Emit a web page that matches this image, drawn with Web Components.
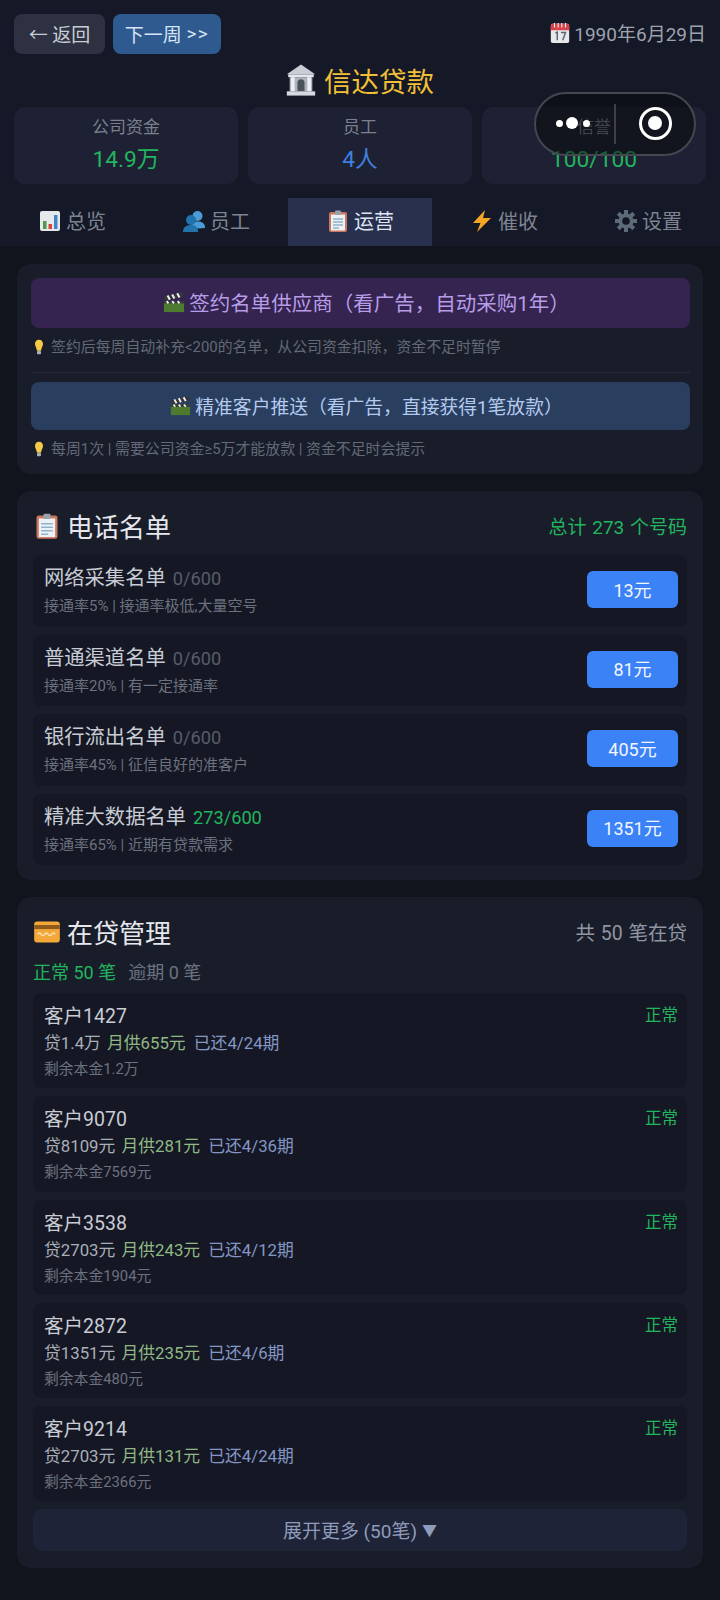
<!DOCTYPE html>
<html lang="zh">
<head>
<meta charset="utf-8">
<title>信达贷款</title>
<style>
  html,body{margin:0;padding:0;background:#11141c}
  body{width:720px;height:1600px;overflow:hidden;font-family:Roboto,"Noto Sans CJK SC",sans-serif;color:#c8ccd4}
</style>
</head>
<body>
<game-screen></game-screen>
<script>
// emoji have no font here, so each one is a small svg
const ICONS = {
  calendar:`<rect x="2" y="2" width="20" height="21" rx="2" fill="#e8e8ea"/><path d="M2 4a2 2 0 0 1 2-2h16a2 2 0 0 1 2 2v5H2z" fill="#d8434b"/><path d="M6 1v5M10 1v5M14 1v5M18 1v5" stroke="#eee" stroke-width="1.2"/><path d="M7 12l2-1v9M13 11.5h5l-3 8.5" fill="none" stroke="#5b6675" stroke-width="1.6"/>`,
  bank:`<path d="M12 1L22 8H2z" fill="#c9ced6"/><rect x="3" y="8" width="18" height="2" fill="#e3e6ea"/><rect x="4" y="10" width="16" height="10" fill="#aeb5bf"/><path d="M5 10h2.500v10H5zM16.500 10H19v10h-2.500z" fill="#eef0f3"/><path d="M9.500 20v-6a2.500 2.500 0 0 1 5 0v6z" fill="#4c525c"/><rect x="2" y="20" width="20" height="3" fill="#d6dae0"/>`,
  chart:`<rect x="2" y="2" width="20" height="20" rx="2" fill="#e6e8ec"/><rect x="5" y="12" width="3.500" height="8" fill="#4f9a4a"/><rect x="10.500" y="15" width="3.500" height="5" fill="#d8413c"/><rect x="16" y="6" width="3.500" height="14" fill="#3f86c8"/>`,
  people:`<circle cx="15.500" cy="7" r="5" fill="#4a9bd6"/><path d="M9 20c0-6 2-7.500 6.500-7.500S23 14.500 23 18v1z" fill="#4a9bd6"/><circle cx="9" cy="11" r="5" fill="#2273ac"/><path d="M1 23c0-5 3-7 8-7s7 2 7 7z" fill="#2273ac"/>`,
  clip:`<rect x="3" y="3" width="18" height="20" rx="2" fill="#c9785f"/><rect x="5" y="5.500" width="14" height="16" fill="#eef1f4"/><path d="M7 10h10M7 13h10M7 16h10M7 19h6" stroke="#8fb3cf" stroke-width="1.300"/><rect x="9" y="1.500" width="6" height="4.500" rx="1" fill="#9aa2ad"/>`,
  bolt:`<path d="M15 1L3 14h7.500L7 23 21 9h-8z" fill="#f5a623"/>`,
  gear:`<g fill="#5d6b78"><circle cx="12" cy="12" r="7.500"/><path d="M10 1h4v5h-4zM10 18h4v5h-4zM1 10h5v4H1zM18 10h5v4h-5z"/><path d="M10 1h4v5h-4zM10 18h4v5h-4zM1 10h5v4H1zM18 10h5v4h-5z" transform="rotate(45 12 12)"/></g><circle cx="12" cy="12" r="3.800" fill="#141722"/>`,
  clapper:`<rect x="1" y="11" width="22" height="12" fill="#4d7a2e"/><path d="M1 6l20-5 1.500 5L2 11z" fill="#33373a"/><path d="M5 5l2.500 4.500M10 3.800l2.500 4.500M15.500 2.500l2.500 4.500" stroke="#eee" stroke-width="2.200"/><path d="M1 11h22v2.500H1z" fill="#33373a"/><path d="M4 11l2 2.500M10 11l2 2.500M16 11l2 2.500" stroke="#eee" stroke-width="2"/>`,
  bulb:`<path d="M12 1C8 1 6 4 6 7.500c0 3.500 2.500 5.500 3 10h6c.5-4.500 3-6.500 3-10C18 4 16 1 12 1z" fill="#f7c948"/><rect x="9" y="18" width="6" height="5" rx="1.500" fill="#aab0ba"/>`,
  card:`<rect x="1" y="3" width="22" height="18" rx="2.500" fill="#f5a83a"/><rect x="1" y="6" width="22" height="3.500" fill="#8f5a1c"/><path d="M4 14c1-1.500 2-1.500 3 0s2 1.500 3 0 2-1.500 3 0 2 1.500 3 0 2-1.500 3 0" fill="none" stroke="#fbe3bd" stroke-width="1.200"/>`
};

class EmojiIcon extends HTMLElement {
  connectedCallback() {
    const s = this.getAttribute("size") || 20;
    this.attachShadow({ mode: "open" }).innerHTML = `
      <style>:host{display:inline-flex;flex:none}svg{display:block}</style>
      <svg width="${s}" height="${s}" viewBox="0 0 24 24">${ICONS[this.getAttribute("name")] || ""}</svg>`;
  }
}

class TopBar extends HTMLElement {
  constructor() {
    super();
    this.attachShadow({ mode: "open" }).innerHTML = `
      <style>
        :host{display:flex;align-items:center;height:40px;gap:8px;padding:14px 14px 0}
        .b{height:40px;display:flex;align-items:center;justify-content:center;border-radius:8px;font-size:19px;box-sizing:border-box;padding-bottom:2px;white-space:pre}
        .back{width:91px;background:#2d3142;color:#c8ccd4}
        .next{width:108px;background:#2f5a8f;color:#d6e4f5}
        .next span{letter-spacing:1.500px}
        .date{margin-left:auto;font-size:19px;color:#9da3ae;display:flex;align-items:center;gap:3px;padding-bottom:3px}
      </style>
      <div class="b back">← 返回</div>
      <div class="b next">下一周 <span>&gt;&gt;</span></div>
      <div class="date"><emoji-icon name="calendar" size="22"></emoji-icon>1990年6月29日</div>`;
  }
}

class StatCard extends HTMLElement {
  connectedCallback() {
    this.attachShadow({ mode: "open" }).innerHTML = `
      <style>
        :host{display:flex;flex-direction:column;align-items:center;flex:1 1 0;height:77px;background:#1e2133;border-radius:11px;box-sizing:border-box;padding-top:7px}
        .l{font-size:17px;line-height:24px;margin-top:1px;color:#7b808e}
        .v{font-size:22.800px;line-height:36px;margin-top:3px;color:${this.getAttribute("color")}}
      </style>
      <div class="l">${this.getAttribute("label")}</div>
      <div class="v">${this.getAttribute("value")}</div>`;
  }
}

class TabBar extends HTMLElement {
  connectedCallback() {
    const tabs = [["chart","总览"],["people","员工"],["clip","运营"],["bolt","催收"],["gear","设置"]];
    this.attachShadow({ mode: "open" }).innerHTML = `
      <style>
        :host{display:grid;grid-template-columns:repeat(5,144px);height:48px;margin-top:14px}
        div{display:flex;align-items:center;justify-content:center;gap:4px;font-size:20px;color:#7d8491;padding-bottom:3px;box-sizing:border-box}
        .on{background:#28304d;color:#dfe5f2}
      </style>
      ${tabs.map((t, i) => `<div class="${i == 2 ? "on" : ""}"><emoji-icon name="${t[0]}" size="24"></emoji-icon>${t[1]}</div>`).join("")}`;
  }
}

class PanelCard extends HTMLElement {
  constructor() {
    super();
    this.attachShadow({ mode: "open" }).innerHTML = `
      <style>
        :host{display:block;margin:0 17px;background:#191d2a;border-radius:14px;box-sizing:border-box}
      </style>
      <slot></slot>`;
  }
}

class AdAction extends HTMLElement {
  connectedCallback() {
    const purple = this.hasAttribute("purple");
    this.attachShadow({ mode: "open" }).innerHTML = `
      <style>
        :host{display:block}
        .b{height:${purple ? 50 : 48}px;border-radius:8px;display:flex;align-items:center;justify-content:center;gap:4px;font-size:${purple ? 20.5 : 18.8}px;padding:0 0 2px 12px;box-sizing:border-box;
           background:${purple ? "#35244f" : "#2a3f5f"};color:${purple ? "#b79ce8" : "#b4cbef"}}
        .h{font-size:14.900px;line-height:20px;margin-top:9px;color:#636977;display:flex;align-items:center;gap:4px}
      </style>
      <div class="b"><emoji-icon name="clapper" size="${purple ? 22 : 21}"></emoji-icon><span><slot></slot></span></div>
      <div class="h"><emoji-icon name="bulb" size="16"></emoji-icon><span>${this.getAttribute("hint")}</span></div>`;
  }
}

class SectionHead extends HTMLElement {
  connectedCallback() {
    this.attachShadow({ mode: "open" }).innerHTML = `
      <style>
        :host{display:flex;align-items:center;justify-content:space-between;height:38px}
        .t{font-size:26px;color:#e6e8ee;display:flex;align-items:center;gap:6px;padding-bottom:3px}
        .r{font-size:${this.getAttribute("side-size") || 19}px;word-spacing:1px;padding-bottom:3px;color:${this.getAttribute("color")}}
      </style>
      <div class="t"><emoji-icon name="${this.getAttribute("icon")}" size="28"></emoji-icon>${this.getAttribute("title")}</div>
      <div class="r">${this.getAttribute("side")}</div>`;
  }
}

class ListRow extends HTMLElement {
  connectedCallback() {
    const has = this.getAttribute("count")[0] != "0";
    this.attachShadow({ mode: "open" }).innerHTML = `
      <style>
        :host{display:flex;align-items:center;justify-content:space-between;height:71.500px;background:#151824;border-radius:8px;padding:0 9px 2px 11px;box-sizing:border-box}
        .n{font-size:20.300px;line-height:30px;color:#c8ccd4}
        .c{font-size:18.200px;margin-left:2px;color:${has ? "#22b45e" : "#565c6a"}}
        .s{font-size:15px;line-height:20px;margin-top:2px;color:#6b717e}
        .p{width:91px;height:37px;border-radius:6px;background:#3b82f6;color:#f2f6ff;font-size:18px;display:flex;align-items:center;justify-content:center;padding-bottom:2px;box-sizing:border-box}
      </style>
      <div><div class="n">${this.getAttribute("name")} <span class="c">${this.getAttribute("count")}</span></div>
      <div class="s">${this.getAttribute("sub")}</div></div>
      <div class="p">${this.getAttribute("price")}</div>`;
  }
}

class LoanRow extends HTMLElement {
  connectedCallback() {
    const [name, amount, month, paid, left] = this.getAttribute("data").split(",");
    this.attachShadow({ mode: "open" }).innerHTML = `
      <style>
        :host{display:block;position:relative;height:95.300px;background:#151824;border-radius:8px;padding:10px 11px 0;box-sizing:border-box}
        .n{font-size:19.500px;line-height:28px;color:#c8ccd4}
        .st{position:absolute;right:9px;top:8px;font-size:16.500px;line-height:30px;color:#22b45e}
        .d{font-size:16.800px;line-height:25px;color:#a9aeb8}
        .m{color:#8fb884;margin:0 2px}.pd{color:#8496c4;margin-left:2px}
        .l{font-size:14.800px;line-height:22px;margin-top:2px;color:#6b717e}
      </style>
      <div class="n">${name}</div><div class="st">正常</div>
      <div class="d">${amount} <span class="m">${month}</span> <span class="pd">${paid}</span></div>
      <div class="l">${left}</div>`;
  }
}

class GameScreen extends HTMLElement {
  constructor() {
    super();
    const lists = [
      ["网络采集名单","0/600","接通率5% | 接通率极低,大量空号","13元"],
      ["普通渠道名单","0/600","接通率20% | 有一定接通率","81元"],
      ["银行流出名单","0/600","接通率45% | 征信良好的准客户","405元"],
      ["精准大数据名单","273/600","接通率65% | 近期有贷款需求","1351元"]
    ];
    const loans = [
      "客户1427,贷1.4万,月供655元,已还4/24期,剩余本金1.2万",
      "客户9070,贷8109元,月供281元,已还4/36期,剩余本金7569元",
      "客户3538,贷2703元,月供243元,已还4/12期,剩余本金1904元",
      "客户2872,贷1351元,月供235元,已还4/6期,剩余本金480元",
      "客户9214,贷2703元,月供131元,已还4/24期,剩余本金2366元"
    ];
    this.attachShadow({ mode: "open" }).innerHTML = `
      <style>
        :host{display:block;position:relative;width:720px;height:1600px;overflow:hidden;background:#11141c}
        header{background:#151826;height:246px;box-sizing:border-box;overflow:hidden}
        h1{margin:3px 0 4px;height:46px;font-size:27.500px;font-weight:400;color:#f2c037;display:flex;align-items:center;justify-content:center;gap:6px;padding-right:2px;box-sizing:border-box}
        .stats{display:flex;gap:10px;padding:0 14px}
        main{display:flex;flex-direction:column;gap:17px;padding-top:18px}
        .ads{padding:14px 13px 0 14px;height:210px;box-sizing:border-box}
        .rule{height:1px;background:#262a38;margin:15px 0 9px}
        .phone{padding:17px 16px 0;height:389px;box-sizing:border-box}
        .rows{display:flex;flex-direction:column;gap:8px;margin-top:9px}
        .loans{padding:17px 16px 0;height:671px;box-sizing:border-box}
        .sum{font-size:18px;line-height:24px;margin-top:9px;color:#6b7280}
        .sum b{font-weight:400;color:#22b45e;margin-right:12px}
        .loans .rows{margin-top:8px}
        .more{height:42px;margin-top:8px;border-radius:10px;background:#1f2337;color:#8e9bbb;font-size:19px;display:flex;align-items:center;justify-content:center;gap:5px;padding-bottom:2px;box-sizing:border-box}
        .more span{font-size:15px}
        .pill{position:absolute;left:534px;top:92px;width:162px;height:64px;box-sizing:border-box;border:2.500px solid #45474f;border-radius:32px;background:rgba(6,7,9,.5)}
        .pill i{position:absolute;background:#fff;border-radius:50%}
        .pill .sep{position:absolute;left:78px;top:10px;width:2px;height:40px;background:#3e4048}
        .pill .ring{position:absolute;left:103px;top:13px;width:33px;height:33px;box-sizing:border-box;border:3.500px solid #fff;border-radius:50%}
      </style>
      <header>
        <top-bar></top-bar>
        <h1><emoji-icon name="bank" size="34"></emoji-icon>信达贷款</h1>
        <div class="stats">
          <stat-card label="公司资金" value="14.9万" color="#22b45e"></stat-card>
          <stat-card label="员工" value="4人" color="#3f7fe0"></stat-card>
          <stat-card label="信誉" value="100/100" color="#22b45e"></stat-card>
        </div>
        <tab-bar></tab-bar>
      </header>
      <main>
        <panel-card><div class="ads">
          <ad-action purple hint="签约后每周自动补充&lt;200的名单，从公司资金扣除，资金不足时暂停">签约名单供应商（看广告，自动采购1年）</ad-action>
          <div class="rule"></div>
          <ad-action hint="每周1次 | 需要公司资金≥5万才能放款 | 资金不足时会提示">精准客户推送（看广告，直接获得1笔放款）</ad-action>
        </div></panel-card>
        <panel-card><div class="phone">
          <section-head icon="clip" title="电话名单" side="总计 273 个号码" color="#22b45e"></section-head>
          <div class="rows">${lists.map(r => `<list-row name="${r[0]}" count="${r[1]}" sub="${r[2]}" price="${r[3]}"></list-row>`).join("")}</div>
        </div></panel-card>
        <panel-card><div class="loans">
          <section-head icon="card" title="在贷管理" side="共 50 笔在贷" side-size="19.500" color="#9096a3"></section-head>
          <div class="sum"><b>正常 50 笔</b>逾期 0 笔</div>
          <div class="rows">${loans.map(d => `<loan-row data="${d}"></loan-row>`).join("")}</div>
          <div class="more">展开更多 (50笔) <span>▼</span></div>
        </div></panel-card>
      </main>
      <div class="pill">
        <i style="left:20px;top:26px;width:7px;height:7px"></i><i style="left:30px;top:23px;width:12px;height:12px"></i><i style="left:47px;top:26px;width:7px;height:7px"></i>
        <span class="sep"></span>
        <span class="ring"><i style="left:6px;top:6px;width:14px;height:14px"></i></span>
      </div>`;
  }
}

customElements.define("emoji-icon", EmojiIcon);
customElements.define("top-bar", TopBar);
customElements.define("stat-card", StatCard);
customElements.define("tab-bar", TabBar);
customElements.define("panel-card", PanelCard);
customElements.define("ad-action", AdAction);
customElements.define("section-head", SectionHead);
customElements.define("list-row", ListRow);
customElements.define("loan-row", LoanRow);
customElements.define("game-screen", GameScreen);
</script>
</body>
</html>
